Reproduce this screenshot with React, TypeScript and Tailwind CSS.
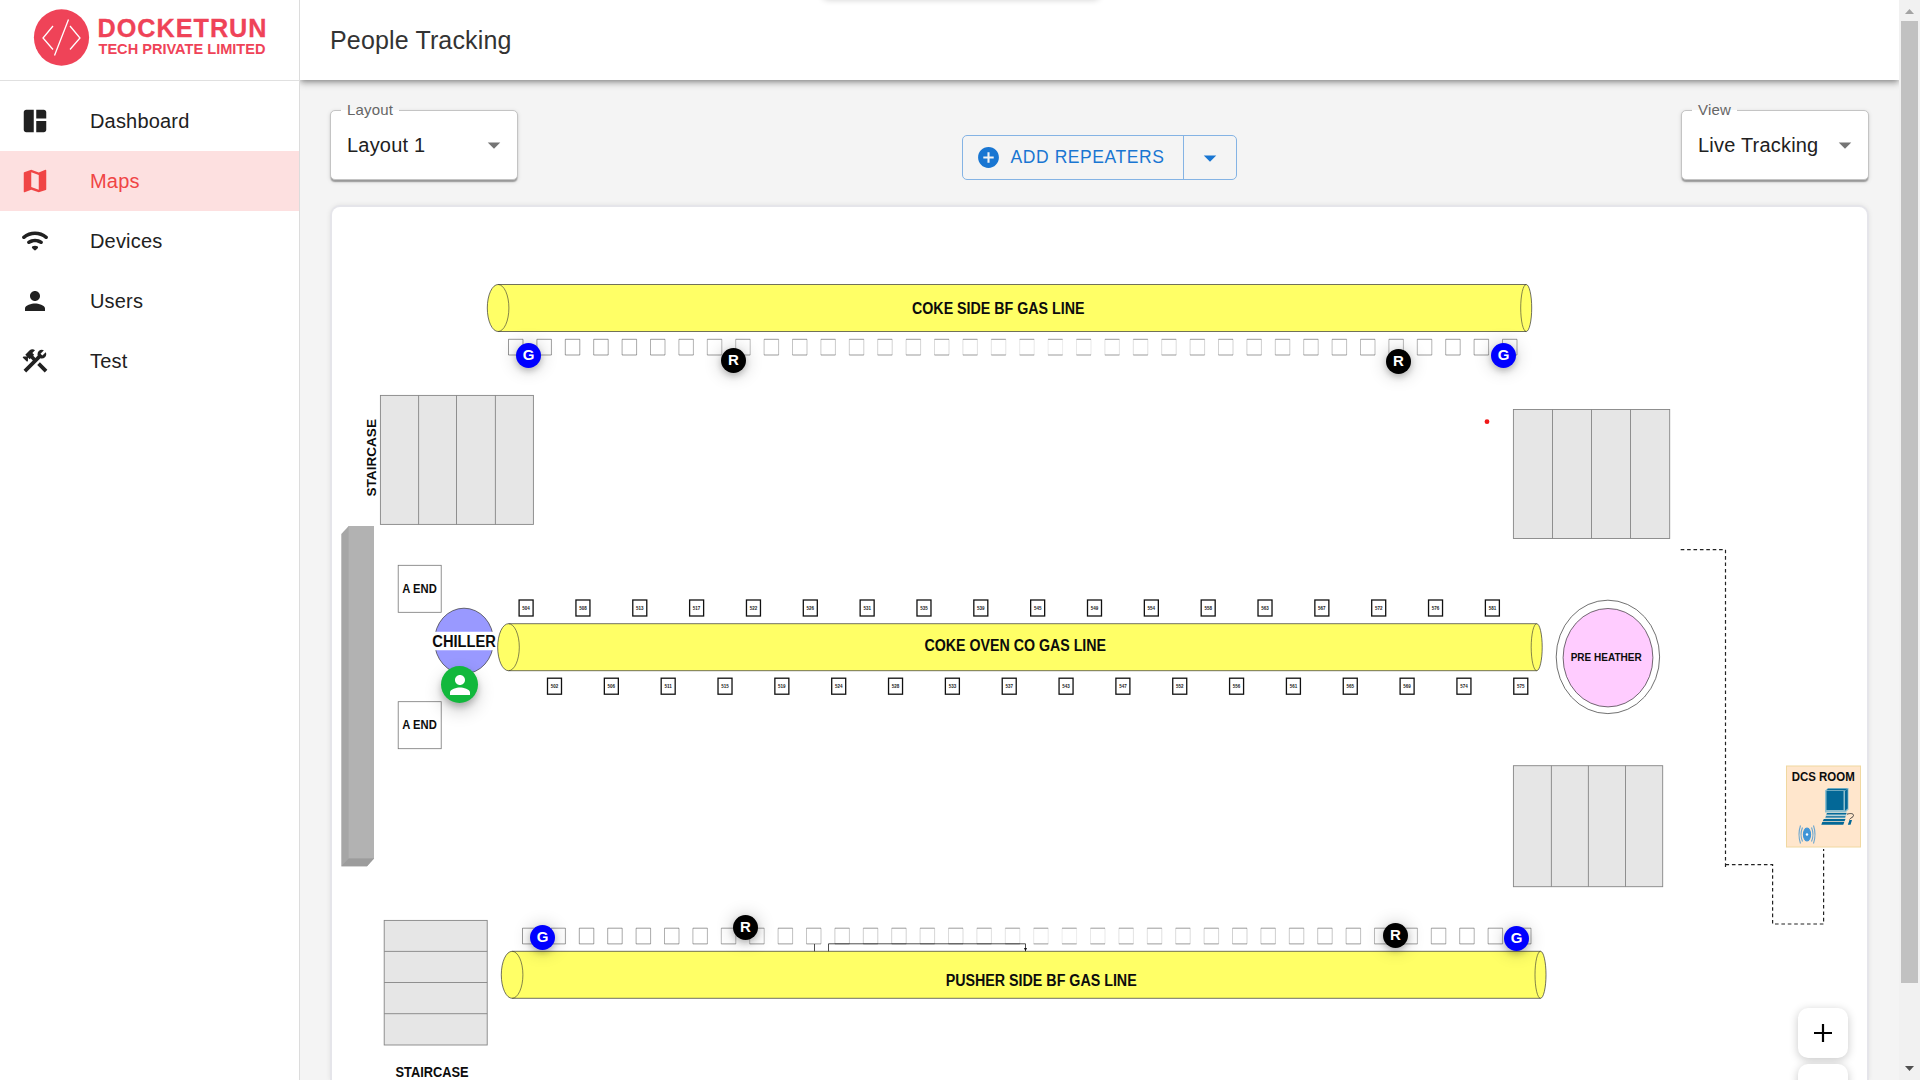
import React from "react";

const BASE = { fontFamily: '"Liberation Sans", Arial, sans-serif' };

type IconProps = { d: string; size?: number; className?: string };

function Icon({ d, size = 30, className = "" }: IconProps) {
  return (
    <svg width={size} height={size} viewBox="0 0 24 24" fill="currentColor" className={`shrink-0 ${className}`}>
      <path d={d} />
    </svg>
  );
}

const PERSON = "M12 12c2.21 0 4-1.79 4-4s-1.79-4-4-4-4 1.79-4 4 1.79 4 4 4zm0 2c-2.67 0-8 1.34-8 4v2h16v-2c0-2.66-5.33-4-8-4z";
const ARROW = "m7 10 5 5 5-5z";

const NAV = [
  { label: "Dashboard", d: "M11 21H5c-1.1 0-2-.9-2-2V5c0-1.1.9-2 2-2h6v18zm2 0h6c1.1 0 2-.9 2-2v-7h-8v9zm8-11V5c0-1.1-.9-2-2-2h-6v7h8z" },
  { label: "Maps", d: "m20.5 3-.16.03L15 5.1 9 3 3.36 4.9c-.21.07-.36.25-.36.48V20.5c0 .28.22.5.5.5l.16-.03L9 18.9l6 2.1 5.64-1.9c.21-.07.36-.25.36-.48V3.5c0-.28-.22-.5-.5-.5zM15 19l-6-2.11V5l6 2.11V19z", active: true },
  { label: "Devices", d: "M2.06 10.06c.51.51 1.32.56 1.87.1 4.67-3.84 11.45-3.84 16.13-.01.56.46 1.38.42 1.89-.09.59-.59.55-1.57-.1-2.1-5.71-4.67-13.97-4.67-19.69 0-.65.52-.7 1.5-.1 2.1zm7.76 7.76 1.47 1.47c.39.39 1.02.39 1.41 0l1.47-1.47c.47-.47.37-1.28-.23-1.59-1.22-.63-2.68-.63-3.91 0-.57.31-.68 1.12-.21 1.59zm-3.73-3.73c.49.49 1.26.54 1.83.13 2.44-1.73 5.72-1.73 8.16 0 .57.4 1.34.36 1.83-.13l.01-.01c.6-.6.56-1.62-.13-2.11-3.44-2.49-8.13-2.49-11.58 0-.69.5-.73 1.51-.12 2.12z" },
  { label: "Users", d: PERSON },
  { label: "Test", d: "m13.783 15.172 2.121-2.121 5.996 5.996-2.121 2.121zM17.5 10c1.93 0 3.5-1.57 3.5-3.5 0-.58-.16-1.12-.41-1.6l-2.7 2.7-1.49-1.49 2.7-2.7c-.48-.25-1.02-.41-1.6-.41C15.57 3 14 4.57 14 6.5c0 .41.08.8.21 1.16l-1.85 1.85-1.78-1.78.71-.71-1.41-1.41L12 3.49c-1.17-1.17-3.07-1.17-4.24 0L4.22 7.03l1.41 1.41H2.81l-.71.71 3.54 3.54.71-.71V9.15l1.41 1.41.71-.71 1.78 1.78-7.41 7.41 2.12 2.12L16.34 9.79c.36.13.75.21 1.16.21z" },
];

function Logo() {
  return (
    <svg width="240" height="64" viewBox="30 6 240 64" fill="#ef4358" fontWeight="bold">
      <ellipse cx="61.5" cy="37.5" rx="27.6" ry="28.2" />
      <path d="M53 26 43 38l10 11.500M70 26l10 12-10 11.500M68.500 19.500 54.500 55.500" fill="none" stroke="#fff" strokeWidth="1.300" />
      <text x="97.500" y="37.300" fontSize="25.200" textLength="169" stroke="#ef4358" strokeWidth="0.3">DOCKETRUN</text>
      <text x="98.500" y="54" fontSize="14.300" textLength="167" lengthAdjust="spacingAndGlyphs">TECH PRIVATE LIMITED</text>
    </svg>
  );
}

function Sidebar() {
  return (
    <aside className="flex w-[300px] shrink-0 flex-col border-r border-[#dcdcdc] bg-white">
      <div className="h-[81px] shrink-0 border-b border-[#e0e0e0] pl-[30px] pt-1.5">
        <Logo />
      </div>
      <nav className="flex flex-col pt-2.5">
        {NAV.map((n) => (
          <a
            key={n.label}
            className={`flex h-[60px] items-center gap-10 pl-5 text-[20px] tracking-[0.18px] ${n.active ? "bg-[#fde0e0] text-[#f04545]" : "text-[#212121]"}`}
          >
            <Icon d={n.d} />
            <span>{n.label}</span>
          </a>
        ))}
      </nav>
    </aside>
  );
}

function SelectBox({ label, value }: { label: string; value: string }) {
  return (
    <div className="relative flex h-[70px] w-[188px] items-start justify-between rounded-[5px] border border-[#c4c4c4] bg-white pl-4 pr-2 pt-[19px] shadow-[0_2.5px_1.25px_-1.25px_rgba(0,0,0,0.2),0_1.25px_1.25px_0_rgba(0,0,0,0.14),0_1.25px_4px_0_rgba(0,0,0,0.12)]">
      <span className="absolute left-[10px] top-[-10px] bg-[linear-gradient(to_bottom,#f4f4f4_9px,#ffffff_9px)] px-[6px] text-[15px] leading-[18px] tracking-[0.2px] text-[#666]">{label}</span>
      <span className="text-[20px] leading-[30px] tracking-[0.2px] text-[#212121]">{value}</span>
      <Icon d={ARROW} className="text-[#757575]" />
    </div>
  );
}

type PipeProps = { x: number; y: number; right: number; label: string; tx: number; tw: number; ty: number };

function Pipe({ x, y, right, label, tx, tw, ty }: PipeProps) {
  return (
    <g>
      <path d={`M${x + 10.800} ${y}H${right - 5.500}a5.500 23.500 0 0 1 0 47H${x + 10.800}a10.800 23.500 0 0 1 0-47z`} fill="#ffff66" stroke="#333" strokeWidth="0.7" />
      <path d={`M${x + 10.800} ${y}a10.800 23.500 0 0 1 0 47M${right - 5.500} ${y}a5.500 23.500 0 0 0 0 47`} fill="none" stroke="#333" strokeWidth="0.6" />
      <Label x={tx} y={ty} w={tw} size={16}>{label}</Label>
    </g>
  );
}

function Label({ x, y, w, size, children }: { x: number; y: number; w: number; size: number; children: string }) {
  return (
    <text x={x} y={y} textLength={w} lengthAdjust="spacingAndGlyphs" fontSize={size} fontWeight="bold" fill="#0c0c0c">
      {children}
    </text>
  );
}

function Stairs({ x, y, w, h, lines, rows }: { x: number; y: number; w: number; h: number; lines: number[]; rows?: boolean }) {
  return (
    <g stroke="#858585" strokeWidth="0.9">
      <rect x={x} y={y} width={w} height={h} fill="#e6e6e6" />
      {lines.map((l) => (
        <path key={l} d={rows ? `M${x} ${l}h${w}` : `M${l} ${y}v${h}`} />
      ))}
    </g>
  );
}

const OVENS_TOP = [504, 508, 513, 517, 522, 526, 531, 535, 539, 545, 549, 554, 558, 563, 567, 572, 576, 581];
const OVENS_BOTTOM = [502, 506, 511, 515, 519, 524, 528, 533, 537, 543, 547, 552, 556, 561, 565, 569, 574, 575];

function Ovens({ cx, y, ids }: { cx: number; y: number; ids: number[] }) {
  return (
    <g>
      {ids.map((id, i) => {
        const c = cx + i * 56.840;
        return (
          <g key={id}>
            <rect x={c - 7} y={y} width="14" height="16" fill="#fff" stroke="#111" strokeWidth="1.300" />
            <text x={c} y={y + 9.900} fontSize="5.200" fontWeight="bold" textAnchor="middle" textLength="7.500" lengthAdjust="spacingAndGlyphs" fill="#222">{id}</text>
          </g>
        );
      })}
    </g>
  );
}

// Side strokes fade towards the middle of the row.
function Posts({ x, y }: { x: number; y: number }) {
  return (
    <g fill="none" stroke="#000">
      {Array.from({ length: 36 }, (_, i) => {
        const px = x + i * 28.400;
        const side = 0.08 + (Math.abs(i - 19) / 19) * 0.32;
        return (
          <g key={i}>
            <path d={`M${px} ${y}h14.500M${px} ${y + 15.700}h14.500`} strokeWidth="0.4" />
            <path d={`M${px} ${y}v15.700M${px + 14.500} ${y}v15.700`} strokeWidth={side} />
          </g>
        );
      })}
    </g>
  );
}

function FloorPlan() {
  return (
    <svg width="1535" height="873" viewBox="332 207 1535 873" className="block">
      <Pipe x={487.300} y={284.500} right={1531.700} label="COKE SIDE BF GAS LINE" tx={912} tw={172.500} ty={313.500} />
      <Posts x={508.500} y={339.300} />
      <Pipe x={497.700} y={623.700} right={1542.200} label="COKE OVEN CO GAS LINE" tx={924.500} tw={181.500} ty={651} />
      <Ovens cx={526.100} y={600} ids={OVENS_TOP} />
      <Ovens cx={554.500} y={678.200} ids={OVENS_BOTTOM} />
      <Posts x={522.500} y={928.200} />
      <Pipe x={501.300} y={951.300} right={1546} label="PUSHER SIDE BF GAS LINE" tx={945.700} tw={191} ty={986} />
      <path d="M814.500 944v7.300M828.500 951.300v-7.500H1025.500v7.500" fill="none" stroke="#222" strokeWidth="0.8" />
      <path d="M1024 948h3l-1.500 3.300z" fill="#111" />

      <Stairs x={380.400} y={395.400} w={153} h={129} lines={[418.600, 456.500, 495.400]} />
      <Stairs x={1513.400} y={409.500} w={156.300} h={129} lines={[1552.500, 1591.500, 1630.500]} />
      <Stairs x={1513.400} y={765.700} w={149.300} h={121} lines={[1551.400, 1588.400, 1625.500]} />
      <Stairs x={384.200} y={920.400} w={103} h={124.600} lines={[951.400, 982.500, 1013.700]} rows />
      <g transform="translate(376.300 496.500) rotate(-90)">
        <Label x={0} y={0} w={77.500} size={13.300}>STAIRCASE</Label>
      </g>
      <Label x={395.500} y={1077.300} w={73} size={14.500}>STAIRCASE</Label>

      <path d="M348.700 526H374V858.500L367 866.300H341.300V534z" fill="#a6a6a6" />
      <path d="M348.700 526H374V858.500H348.700z" fill="#b2b2b2" />
      <path d="M348.700 858.500H374L367 866.300H341.300z" fill="#9c9c9c" />

      <g fill="#fff" stroke="#777" strokeWidth="0.8">
        <rect x="398.200" y="565.300" width="43" height="47" />
        <rect x="398.200" y="701.700" width="43" height="47" />
      </g>
      <Label x={402.300} y={593.200} w={34.500} size={12.700}>A END</Label>
      <Label x={402.300} y={729.400} w={34.500} size={12.700}>A END</Label>

      <ellipse cx="464" cy="641" rx="29.500" ry="32.800" fill="#9999ff" stroke="#333" strokeWidth="0.7" />
      <path d="M432 631.700h63v18.600h-63z" fill="#fff" />
      <Label x={432.300} y={646.500} w={63.500} size={16}>CHILLER</Label>

      <g stroke="#333" strokeWidth="0.7">
        <ellipse cx="1607.900" cy="656.900" rx="51.700" ry="56.700" fill="#fff" />
        <ellipse cx="1608" cy="657.700" rx="44.900" ry="49.200" fill="#ffccff" />
      </g>
      <Label x={1570.700} y={661.400} w={71} size={11.700}>PRE HEATHER</Label>

      <circle cx="1487" cy="421.700" r="2.400" fill="#f01818" />
      <path d="M1680.700 549.700H1725.500V869M1725.500 864.700H1772.600V924H1823.600V849" fill="none" stroke="#222" strokeWidth="1.200" strokeDasharray="3.600 2.800" />

      <rect x="1786.500" y="766" width="74" height="81" fill="#ffe6cc" stroke="#f0d8a0" />
      <Label x={1791.700} y={780.600} w={63} size={12.700}>DCS ROOM</Label>
      <g>
        <path d="M1825 790.500l3-2.500h20.500v21.500l-3 3H1825z" fill="#8fbfce" />
        <path d="M1826.500 791h17v19h-17z" fill="#036897" />
        <path d="M1828 788.700h19.500l-2 1.500h-19zM1845 791l2.700-2v19.500l-2.700 2.300z" fill="#036897" />
        <path d="M1826.500 812.500h20.500l-1.500 6H1825z" fill="#b9d3d8" />
        <path d="M1827 813h19.500l-.5 1.500h-19.500zM1826 816.300h19.500l-.5 1.200h-19.500zM1823.800 819h21.700l-1 2.200h-21.800zM1822.300 822h22l-1 2.700h-22z" fill="#036897" />
        <path d="M1847 814.200c3.500-1.200 6.700-.7 6.500 1.300-.2 2-2.500 1.800-4 4" fill="none" stroke="#333" strokeWidth="0.9" />
        <path d="M1849.500 820h2.500l-1.500 4.700h-2.700z" fill="#036897" />
      </g>
      <g fill="none" stroke="#6aa5cf" strokeWidth="1.100">
        <ellipse cx="1807" cy="834.500" rx="3.600" ry="6.500" fill="#4095d6" stroke="#4095d6" />
        <circle cx="1807" cy="834.500" r="1.200" fill="#fff" stroke="none" />
        <path d="M1802.500 827.500q-3 7 0 14M1811.500 827.500q3 7 0 14M1800.500 825.500q-3 9 0 18M1813.500 825.500q3 9 0 18" />
      </g>
    </svg>
  );
}

// Marker centres, relative to the plan's top-left corner.
const MARKERS = [
  { kind: "G", x: 196.500, y: 148.500 },
  { kind: "R", x: 401.500, y: 153.500 },
  { kind: "R", x: 1066.500, y: 154.500 },
  { kind: "G", x: 1171.500, y: 148.500 },
  { kind: "G", x: 210.500, y: 730.500 },
  { kind: "R", x: 413.500, y: 720.500 },
  { kind: "R", x: 1063.500, y: 728.500 },
  { kind: "G", x: 1184.500, y: 731.500 },
];

function MapCard() {
  return (
    <section className="relative min-h-0 flex-1 overflow-hidden rounded-t-[10px] border-2 border-b-0 border-[#e5e5ea] bg-white shadow-[0_0_5px_rgba(0,0,0,0.08)]">
      <FloorPlan />
      {MARKERS.map((m, i) => (
        <div
          key={i}
          style={{ left: m.x - 12.500, top: m.y - 12.500 }}
          className={`absolute flex size-[25px] items-center justify-center rounded-full pb-[2px] text-[15px] font-bold leading-none text-white shadow-[0_3px_6px_rgba(0,0,0,0.2),0_1px_18px_rgba(0,0,0,0.24)] ${m.kind === "G" ? "bg-[#0000ff]" : "bg-black"}`}
        >
          {m.kind}
        </div>
      ))}
      <div className="absolute left-[109px] top-[459px] flex size-[37px] items-center justify-center rounded-full bg-[#12b83c] text-white shadow-[0_4px_6px_rgba(0,0,0,0.2),0_8px_18px_rgba(0,0,0,0.2)]">
        <Icon d={PERSON} />
      </div>
      <div className="absolute right-[19px] top-[801px] flex flex-col gap-1.5">
        <button className="flex size-[50px] items-center justify-center rounded-[10px] bg-white shadow-[0_2px_10px_rgba(0,0,0,0.22)]">
          <svg width="18" height="18" viewBox="0 0 18 18" stroke="#000" strokeWidth="2.200">
            <path d="M9 0v18M0 9h18" />
          </svg>
        </button>
        <button className="size-[50px] rounded-[10px] bg-white shadow-[0_2px_10px_rgba(0,0,0,0.22)]" />
      </div>
    </section>
  );
}

function Scrollbar() {
  return (
    <div className="flex w-[21px] shrink-0 flex-col items-center justify-between bg-[#f1f1f1]">
      <div className="flex h-[21px] items-center pt-[2px]">
        <svg width="9" height="5" viewBox="0 0 9 5" fill="#a3a3a3"><path d="M0 5 4.500 0 9 5z" /></svg>
      </div>
      <div className="flex-1 self-stretch px-[2px]">
        <div className="h-[962px] bg-[#c1c1c1]" />
      </div>
      <div className="flex h-[21px] items-center pb-[2px]">
        <svg width="9" height="5" viewBox="0 0 9 5" fill="#505050"><path d="M0 0 4.500 5 9 0z" /></svg>
      </div>
    </div>
  );
}

export default function App() {
  return (
    <div style={BASE} className="relative flex h-[1080px] w-[1920px] overflow-hidden bg-[#f4f4f4]">
      <Sidebar />
      <div className="flex min-w-0 flex-1 flex-col overflow-hidden">
        <header className="flex h-20 shrink-0 items-center bg-white pl-[30px] pt-[2px] text-[25px] tracking-[0.15px] text-[#333] shadow-[0_2px_5px_-1px_rgba(0,0,0,0.32),0_4px_7px_0_rgba(0,0,0,0.2)]">
          <h1>People Tracking</h1>
        </header>
        <main className="flex min-h-0 flex-1 flex-col pl-[30px] pr-[30px] pt-[30px]">
          <div className="mb-[25px] flex h-[70px] shrink-0 items-end justify-between">
            <SelectBox label="Layout" value="Layout 1" />
            <div className="mr-px flex h-[45px] rounded-[5px] border border-[#84b3e4] text-[#1976d2]">
              <button className="flex w-[221px] items-center gap-[10px] whitespace-nowrap border-r border-[#84b3e4] pl-[13px] text-[17.5px] tracking-[0.58px]">
                <Icon size={25} d="M12 2C6.480 2 2 6.480 2 12s4.480 10 10 10 10-4.480 10-10S17.520 2 12 2zm5 11h-4v4h-2v-4H7v-2h4V7h2v4h4v2z" />
                <span>ADD REPEATERS</span>
              </button>
              <button className="flex w-[52px] items-center justify-center">
                <Icon d={ARROW} />
              </button>
            </div>
            <SelectBox label="View" value="Live Tracking" />
          </div>
          <MapCard />
        </main>
      </div>
      <Scrollbar />
      <div className="absolute left-[822px] top-[-20px] h-5 w-[278px] rounded-md shadow-[0_0_6px_rgba(0,0,0,0.18)]" />
    </div>
  );
}
